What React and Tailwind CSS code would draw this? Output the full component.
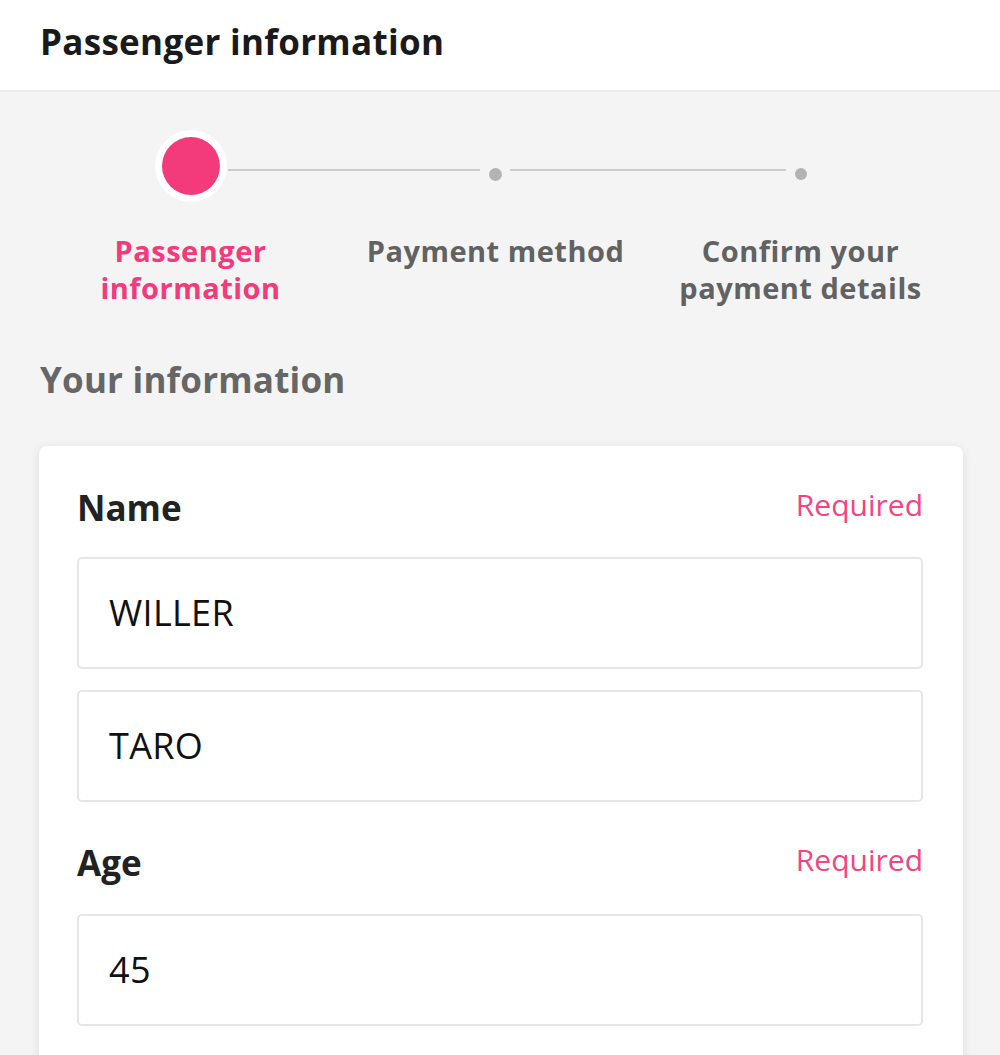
import React from 'react';

const font = { fontFamily: '"Open Sans", "Noto Sans", sans-serif' };

const steps = [
  { label: ['Passenger', 'information'], active: true },
  { label: ['Payment method'] },
  { label: ['Confirm your', 'payment details'] },
];

const Field = ({ value }) => (
  <div className="h-[112px] rounded-[5px] border-2 border-[#e6e6e6] bg-white flex items-center pl-[30px] text-[36px] text-[#111] tracking-[0.3px]">
    {value}
  </div>
);

const FieldLabel = ({ children }) => (
  <div className="flex items-center justify-between h-[40px]">
    <span className="text-[35px] font-bold text-[#222]">{children}</span>
    <span className="text-[30px] text-[#f4457f] mb-[8px]">Required</span>
  </div>
);

export default function App() {
  return (
    <div className="min-h-screen bg-[#f4f4f4]" style={font}>
      {/* Header */}
      <div className="h-[92px] bg-white border-b-2 border-[#ebebeb] flex items-center pl-[40px] pb-[6px]">
        <h1 className="text-[35px] font-bold text-[#1a1a1a] tracking-[0.3px]">Passenger information</h1>
      </div>

      {/* Stepper */}
      <div className="pt-[38px]">
        <div className="flex items-start">
          <div className="ml-[155px] w-[72px] h-[72px] rounded-full bg-white flex items-center justify-center">
            <div className="w-[58px] h-[58px] rounded-full bg-[#f33a7a]" />
          </div>
          <div className="ml-[1px] mt-[39px] w-[252px] h-[2px] bg-[#cccccc]" />
          <div className="ml-[9px] mt-[38px] w-[13px] h-[13px] rounded-full bg-[#b3b3b3]" />
          <div className="ml-[8px] mt-[39px] w-[276px] h-[2px] bg-[#cccccc]" />
          <div className="ml-[9px] mt-[38px] w-[12px] h-[12px] rounded-full bg-[#b3b3b3]" />
        </div>
        <div className="grid grid-cols-[305px_305px_305px] ml-[38px] mt-[30px]">
          {steps.map((s, i) => (
            <div
              key={i}
              className={`text-center text-[29px] font-bold leading-[37px] tracking-[0.5px] ${
                s.active ? 'text-[#f33a7a]' : 'text-[#626262]'
              }`}
            >
              {s.label.map((l) => (
                <div key={l}>{l}</div>
              ))}
            </div>
          ))}
        </div>
      </div>

      {/* Your information */}
      <h2 className="mt-[52px] pl-[40px] text-[35px] font-bold text-[#666666] leading-[44px] tracking-[0.2px]">Your information</h2>

      <div className="mt-[44px] ml-[39px] w-[924px] bg-white rounded-[8px] shadow-[0_2px_10px_rgba(0,0,0,0.1)] pl-[38px] pr-[40px] pt-[42px] pb-[40px]">
        <FieldLabel>Name</FieldLabel>
        <div className="mt-[29px] flex flex-col gap-[21px]">
          <Field value="WILLER" />
          <Field value="TARO" />
        </div>
        <div className="mt-[41px]">
          <FieldLabel>Age</FieldLabel>
        </div>
        <div className="mt-[31px]">
          <Field value="45" />
        </div>
      </div>
    </div>
  );
}
